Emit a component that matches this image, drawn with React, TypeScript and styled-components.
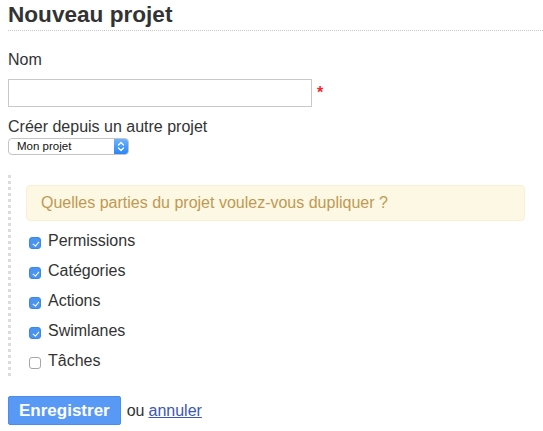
import React from "react";
import styled, { createGlobalStyle } from "styled-components";

const GlobalStyle = createGlobalStyle`
  html, body {
    margin: 0;
    padding: 0;
    background: #ffffff;
  }
  body {
    font-family: "Liberation Sans", Arial, Helvetica, sans-serif;
    font-size: 16px;
    color: #333333;
  }
`;

const Page = styled.div`
  padding: 4px 0 0 8px;
`;

const Title = styled.h2`
  margin: 0;
  padding: 0 0 4px 0;
  font-size: 22.6px;
  line-height: 22px;
  font-weight: bold;
  color: #333333;
  border-bottom: 1px dotted #c8c8c8;
`;

const Form = styled.form`
  display: flex;
  flex-direction: column;
  align-items: flex-start;
`;

const Label = styled.label<{ $mt: number }>`
  display: block;
  margin-top: ${(p) => p.$mt}px;
  font-size: 16px;
  line-height: 20px;
  color: #333333;
`;

const InputRow = styled.div`
  display: flex;
  align-items: center;
  margin-top: 9px;
`;

const TextInput = styled.input`
  box-sizing: border-box;
  width: 304px;
  height: 28px;
  border: 1px solid #c8c8c8;
  padding: 0 4px;
  font-family: inherit;
  font-size: 16px;
  outline: none;
`;

const Required = styled.span`
  margin-left: 5px;
  color: #f0282d;
  font-weight: bold;
  font-size: 16px;
  line-height: 18px;
`;

const SelectBox = styled.div`
  display: inline-flex;
  box-sizing: border-box;
  width: 121px;
  height: 17px;
  margin-top: 1px;
  border: 1px solid #c4c4c4;
  border-radius: 4px;
  overflow: hidden;
  background: #ffffff;
`;

const NativeSelect = styled.select`
  appearance: none;
  -webkit-appearance: none;
  flex: 1;
  min-width: 0;
  border: none;
  background: transparent;
  padding: 0 0 0 8px;
  margin: 0;
  font-family: "Liberation Sans", Arial, sans-serif;
  font-size: 11.5px;
  line-height: 15px;
  height: 15px;
  color: #111111;
  outline: none;
`;

const SelectArrow = styled.span`
  display: flex;
  align-items: center;
  justify-content: center;
  width: 14px;
  height: 100%;
  background: linear-gradient(#6db3fd, #2a86f7);
`;

const Group = styled.div`
  align-self: stretch;
  margin-top: 20px;
  padding: 10px 0 0 15px;
  border-left: 3px dotted #dcdcdc;
  display: flex;
  flex-direction: column;
`;

const Alert = styled.div`
  margin: 0 18px 5px 0;
  padding: 8px 14px;
  font-size: 16px;
  line-height: 18px;
  color: #c09853;
  background: #fcf8e3;
  border: 1px solid #fbeed5;
  border-radius: 4px;
`;

const CheckRow = styled.label`
  display: flex;
  align-items: center;
  height: 30px;
  font-size: 16px;
  line-height: 30px;
  color: #333333;
`;

const Check = styled.input`
  appearance: none;
  -webkit-appearance: none;
  position: relative;
  box-sizing: border-box;
  width: 12px;
  height: 12px;
  margin: 4px 7px 0 3px;
  border-radius: 3px;
  border: 1px solid #a6a6a6;
  background: #ffffff;
  &:checked {
    border-color: #3b88ea;
    background: #4a93ee;
  }
  &:checked::after {
    content: "";
    position: absolute;
    left: 3.5px;
    top: 1.5px;
    width: 2.5px;
    height: 5px;
    border-right: 1.5px solid #ffffff;
    border-bottom: 1.5px solid #ffffff;
    transform: rotate(40deg);
  }
`;

const Actions = styled.div`
  display: flex;
  align-items: center;
  margin-top: 20px;
  font-size: 16px;
  color: #333333;
`;

const SubmitButton = styled.button`
  box-sizing: border-box;
  height: 29px;
  padding: 0 10px;
  border: 1px solid #4b8ced;
  border-radius: 2px;
  background: #5899f6;
  color: #ffffff;
  font-family: "Liberation Sans", Arial, sans-serif;
  font-size: 17px;
  font-weight: bold;
  cursor: pointer;
`;

const Or = styled.span`
  margin-left: 6px;
`;

const CancelLink = styled.a`
  margin-left: 4px;
  color: #3c56b4;
  text-decoration: underline;
`;

const parts = [
  { name: "Permissions", checked: true },
  { name: "Catégories", checked: true },
  { name: "Actions", checked: true },
  { name: "Swimlanes", checked: true },
  { name: "Tâches", checked: false },
];

export default function App() {
  return (
    <Page>
      <GlobalStyle />
      <Title>Nouveau projet</Title>
      <Form onSubmit={(e) => e.preventDefault()}>
        <Label $mt={19} htmlFor="name">Nom</Label>
        <InputRow>
          <TextInput id="name" type="text" />
          <Required>*</Required>
        </InputRow>
        <Label $mt={10} htmlFor="src">Créer depuis un autre projet</Label>
        <SelectBox>
          <NativeSelect id="src" defaultValue="1">
            <option value="1">Mon projet</option>
          </NativeSelect>
          <SelectArrow>
            <svg width="8" height="11" viewBox="0 0 8 11" fill="none">
              <path d="M1.5 4 L4 1.5 L6.5 4" stroke="#fff" strokeWidth="1.3" strokeLinecap="round" strokeLinejoin="round" />
              <path d="M1.5 7 L4 9.5 L6.5 7" stroke="#fff" strokeWidth="1.3" strokeLinecap="round" strokeLinejoin="round" />
            </svg>
          </SelectArrow>
        </SelectBox>
        <Group>
          <Alert>Quelles parties du projet voulez-vous dupliquer ?</Alert>
          {parts.map((p) => (
            <CheckRow key={p.name}>
              <Check type="checkbox" defaultChecked={p.checked} />
              {p.name}
            </CheckRow>
          ))}
        </Group>
        <Actions>
          <SubmitButton type="submit">Enregistrer</SubmitButton>
          <Or>ou</Or>
          <CancelLink href="#">annuler</CancelLink>
        </Actions>
      </Form>
    </Page>
  );
}
